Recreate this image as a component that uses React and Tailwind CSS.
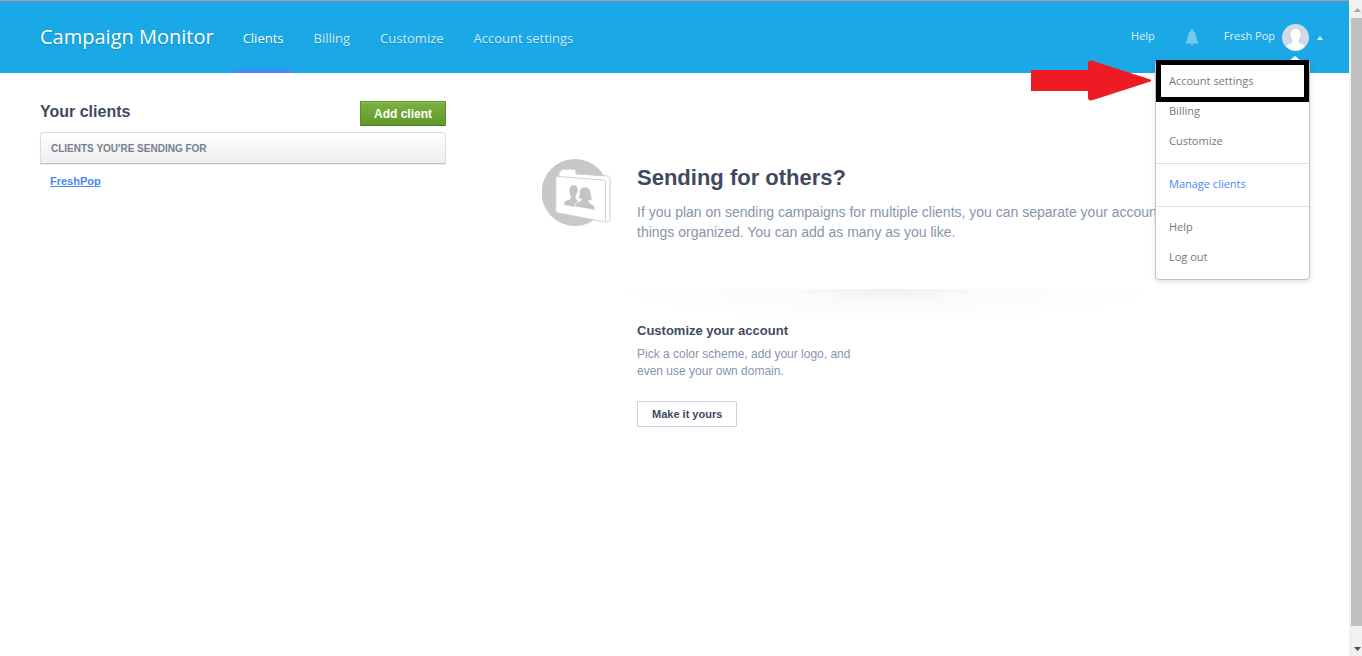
const navItems = ["Clients", "Billing", "Customize", "Account settings"];

const menuGroups = [
  ["Account settings", "Billing", "Customize"],
  ["Manage clients"],
  ["Help", "Log out"],
];

function BellIcon() {
  return (
    <svg className="h-[17px] w-[14px]" viewBox="0 0 14 17" fill="#76caf0" aria-hidden="true">
      <path d="M7 0.300c.6 0 1 .5 1 1.200v.5c1.900.6 2.800 2 3 4.200.3 3.600 1 5.800 2.600 7.300v1H.4v-1C2 12 2.700 9.800 3 6.200 3.200 4 4.100 2.600 6 2v-.5C6 .8 6.400.3 7 .3z" />
      <path d="M5.200 15.200h3.600c-.2.800-.8 1.200-1.800 1.200s-1.600-.4-1.800-1.200z" />
    </svg>
  );
}

function Avatar() {
  return (
    <svg className="h-[27px] w-[27px]" viewBox="0 0 27 27" aria-hidden="true">
      <circle cx="13.500" cy="13.500" r="13.500" fill="#d2d9e6" />
      <path
        d="M13.500 5c3.200 0 5 2 5 5.200 0 1.400-.3 2.400-.8 3.300-.4 1.300-1 2.300-1.200 3.200-.2 1.500.4 2.300 1.900 2.900 1.800.7 3.300 1.300 4.200 2.300C20.500 25 17 26.500 13.500 26.500S6.500 25 4.400 21.900c.9-1 2.400-1.600 4.200-2.300 1.500-.6 2.100-1.400 1.900-2.900-.2-.9-.8-1.900-1.200-3.200-.5-.9-.8-1.900-.8-3.300C8.500 7 10.300 5 13.500 5z"
        fill="#fff"
      />
    </svg>
  );
}

function ClientsFolder() {
  return (
    <svg className="mt-px h-[68px] w-[71px] shrink-0" viewBox="0 0 71 68" aria-hidden="true">
      <circle cx="33" cy="33.500" r="33.500" fill="#c8c8c8" />
      <path
        d="M17 19v-4.500c0-1 .7-1.700 1.700-1.800L19 11.500c.2-.8.700-1.200 1.500-1.200h11.600c.8 0 1.300.4 1.500 1.200l.6 3.500L65.500 17c1.500.1 2.500 1 2.500 2.500v40c0 2.500-1.500 3.800-4 3.500z"
        fill="#fff" stroke="#d0d0d0" strokeWidth="1"
      />
      <path
        d="M15.500 17.500l46 3.500c1.200.1 2 .9 2 2.100v36.700c0 2-1 3-3 2.600L16.300 54c-1.500-.3-2.500-1.200-2.500-2.700V19c0-1 .7-1.600 1.700-1.500z"
        fill="#fff" stroke="#d0d0d0" strokeWidth="1"
      />
      <path
        d="M31.500 26.200c3 0 4.500 2 4.300 5-.1 1.500-.6 2.600-1.300 3.800-.7 1.300-1.200 2.500-1 3.800.2 1.200 1 2 2.400 2.600l-.3 6.800-13.500-2.200c0-2.200.5-3.500 2.300-4.400 2.300-1 4.200-1.400 4.500-3.200.2-1.500-.5-2.500-1.100-4-.5-1.200-.6-2.300-.5-3.600.3-2.900 1.700-4.600 4.200-4.600z"
        fill="#c4c4c4"
      />
      <path
        d="M43.300 28c3.600.2 5.300 2.800 5.700 6.500.2 2.800.8 4.500 1.500 6.300-1 .7-2.300 1-3.700.9-.2 1.500.6 2.400 2.500 3.200 2.400 1 3.900 2.300 4 6.300L33 47.800c0-3 1.300-4.500 3.500-5.200 1.900-.6 3-1 3.100-2.300-1.400-.1-2.600-.5-3.400-1.300.9-1.800 1.200-3 1.200-5.600.1-3.400 2.200-5.600 5.900-5.400z"
        fill="#c4c4c4" stroke="#fff" strokeWidth="0.800"
      />
    </svg>
  );
}

function PointerArrow() {
  return (
    <svg
      className="absolute top-0 right-full mr-[3px] h-[41px] w-[121px]"
      viewBox="0 0 121 41" fill="#ed1c24" aria-hidden="true"
    >
      <path d="M0 10h57V3c0-2 2-3 5-2l56 18c3 1 3 2 0 3L62 40c-3 1-5 0-5-2v-7H0z" />
    </svg>
  );
}

function AccountMenu() {
  return (
    <div className="absolute top-full right-[13px] z-10 w-[155px]">
      <PointerArrow />
      <svg className="absolute -top-1 right-2.5 h-1 w-2.5" viewBox="0 0 10 4" fill="#fff" aria-hidden="true">
        <path d="M0 4L5 0l5 4z" />
      </svg>
      <div className="absolute inset-x-px top-0 h-[42px] border-[5px] border-black" />
      <nav className="rounded border border-[#c1c1c3] bg-white shadow-[0_2px_5px_rgba(0,0,0,0.12)]">
        {menuGroups.map((group, index) => (
          <ul key={group[0]} className={index ? "border-t border-[#dce1e6] pt-[5px] pb-[7px]" : "pt-[5px] pb-[7px]"}>
            {group.map((label) => (
              <li key={label}>
                <a
                  href="#"
                  className={`block px-[13px] text-[11px] leading-[30px] ${
                    label === "Manage clients" ? "text-[#4787f7]" : "text-[#727a80]"
                  }`}
                >
                  {label}
                </a>
              </li>
            ))}
          </ul>
        ))}
      </nav>
    </div>
  );
}

function Header() {
  return (
    <header className="flex h-[73px] items-stretch border-t border-[#cf8ba3] bg-[#1aa8e6] pr-[26px] pl-10 font-['Open_Sans',sans-serif]">
      <a href="#" className="self-center text-[20px] leading-[72px] text-white text-shadow-[0_1px_1px_rgba(0,0,0,0.2)]">
        Campaign Monitor
      </a>
      <nav className="ml-5 flex gap-3">
        {navItems.map((label) => (
          <a
            key={label}
            href="#"
            className={`px-[9px] pt-[3px] text-[13px] leading-[68px] text-shadow-[0_1px_1px_rgba(0,0,0,0.15)] ${
              label === "Clients" ? "border-b-4 border-[#4787f7] text-white" : "text-[#cfecfa]"
            }`}
          >
            {label}
          </a>
        ))}
      </nav>
      <div className="ml-auto flex items-center text-[11px] text-[#dff3fc]">
        <a href="#" className="pb-0.5">Help</a>
        <button type="button" aria-label="Notifications" className="ml-[30px]">
          <BellIcon />
        </button>
        <div className="relative ml-[25px]">
          <button type="button" aria-expanded="true" className="flex h-[46px] items-center">
            <span className="pb-0.5">Fresh Pop</span>
            <span className="ml-[7px]">
              <Avatar />
            </span>
            <svg className="mt-0.5 ml-2 h-1 w-1.5" viewBox="0 0 6 4" fill="#dff3fc" aria-hidden="true">
              <path d="M0 4l3-4 3 4z" />
            </svg>
          </button>
          <AccountMenu />
        </div>
      </div>
    </header>
  );
}

function ClientList() {
  return (
    <section className="w-[406px] shrink-0">
      <div className="flex items-start justify-between">
        <h1 className="text-[16px] leading-6 font-bold text-[#3f4a5f]">Your clients</h1>
        <button
          type="button"
          className="mt-px h-[25px] rounded-[1px] border border-[#5a9428] border-b-[#447a17] bg-linear-to-b from-[#7ab13f] to-[#61982b] px-[13px] text-[12px] font-bold text-white shadow-[inset_0_1px_0_#8fc356]"
        >
          Add client
        </button>
      </div>
      <h2 className="mt-1.5 rounded-t border border-[#dcdcdc] border-b-[#c2c2c2] bg-linear-to-b from-white to-[#eeeeee] px-2.5 pt-px text-[10px] leading-[29px] font-bold text-[#75808e] shadow-[0_1px_1px_rgba(0,0,0,0.08)]">
        CLIENTS YOU&apos;RE SENDING FOR
      </h2>
      <a href="#" className="mt-2 ml-2.5 inline-block text-[11px] leading-[18px] font-bold text-[#4787f7] underline">
        FreshPop
      </a>
    </section>
  );
}

function Intro() {
  return (
    <section className="flex min-w-0 flex-1 items-start gap-6 pt-[58px]">
      <ClientsFolder />
      <div className="min-w-0 flex-1">
        <h2 className="mt-2 text-[22px] leading-6 font-bold text-[#3f4a5f]">Sending for others?</h2>
        <p className="mt-3 text-[14px] leading-5 whitespace-nowrap text-[#8795aa]">
          If you plan on sending campaigns for multiple clients, you can separate your account into
          <br />
          things organized. You can add as many as you like.
        </p>
        <div className="mt-[47px] -ml-5 h-[33px] max-w-[540px] bg-[radial-gradient(ellipse_50%_100%_at_50%_0%,#f0f0f0_0%,#fafafa_35%,#fff_100%)]" />
        <h3 className="text-[13px] leading-[18px] font-bold text-[#3f4a5f]">Customize your account</h3>
        <p className="mt-1.5 max-w-[220px] text-[12px] leading-[17px] text-[#8795aa]">
          Pick a color scheme, add your logo, and even use your own domain.
        </p>
        <button type="button" className="mt-[21px] h-[26px] rounded-[1px] border border-[#d0d3de] bg-white px-3.5 text-[11px] font-bold text-[#3f4a5f]">
          Make it yours
        </button>
      </div>
    </section>
  );
}

function ScrollTrack() {
  return (
    <div className="flex w-[13px] shrink-0 flex-col items-end bg-[#f1f1f1]" aria-hidden="true">
      <svg className="h-[18px] w-[11px]" viewBox="0 0 11 18" fill="#a3a3a3">
        <path d="M3 12l3.500-4 3.500 4z" />
      </svg>
      <div className="w-[11px] flex-1 bg-[#c1c1c1]" />
      <svg className="h-[30px] w-[11px]" viewBox="0 0 11 30" fill="#505050">
        <path d="M3 21h7l-3.500 4z" />
      </svg>
    </div>
  );
}

export default function App() {
  return (
    <div className="flex min-h-screen bg-white font-['Liberation_Sans',Arial,sans-serif]">
      <div className="min-w-0 flex-1">
        <Header />
        <main className="flex gap-24 pt-[27px] pl-10">
          <ClientList />
          <Intro />
        </main>
      </div>
      <ScrollTrack />
    </div>
  );
}
